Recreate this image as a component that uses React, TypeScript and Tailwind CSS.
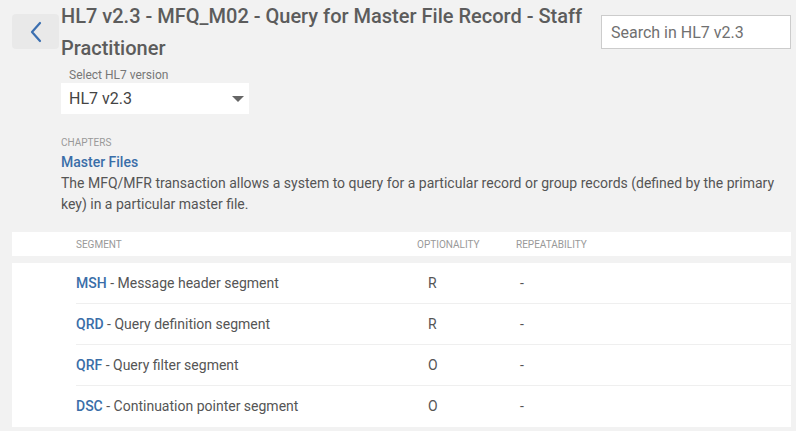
import React from "react";

const segments = [
  { code: "MSH", name: "Message header segment", opt: "R", rep: "-" },
  { code: "QRD", name: "Query definition segment", opt: "R", rep: "-" },
  { code: "QRF", name: "Query filter segment", opt: "O", rep: "-" },
  { code: "DSC", name: "Continuation pointer segment", opt: "O", rep: "-" },
];

const App: React.FC = () => {
  return (
    <div
      className="min-h-screen w-full bg-[#f2f2f2] px-[12px] pr-[5px] text-[#555]"
      style={{ fontFamily: "Roboto, 'Noto Sans', Arial, sans-serif" }}
    >
      <div className="flex items-start">
        <button className="mt-[14px] flex h-[35px] w-[47px] shrink-0 items-center justify-center rounded bg-[#e9e9e9]">
          <svg width="14" height="22" viewBox="0 0 14 22" fill="none">
            <path d="M11 2 L3 11 L11 20" stroke="#3b6fb0" strokeWidth="2.2" strokeLinecap="round" strokeLinejoin="round" />
          </svg>
        </button>
        <div className="ml-[2px] flex-1">
          <h1 className="text-[20px] font-medium leading-[32px] text-[#5c5c5c]">
            HL7 v2.3 - MFQ_M02 - Query for Master File Record - Staff Practitioner
          </h1>
        </div>
        <input
          className="mt-[15px] ml-[16px] h-[34px] w-[190px] shrink-0 border border-[#cccccc] bg-white px-[9px] text-[16px] text-[#555] outline-none placeholder:text-[#707070]"
          placeholder="Search in HL7 v2.3"
        />
      </div>

      <div className="ml-[49px]">
        <div className="mt-[3px] pl-[8px] text-[12px] leading-[16px] text-[#777]">Select HL7 version</div>
        <div className="flex h-[31px] w-[188px] items-center justify-between bg-white pl-[8px] pr-[4px]">
          <span className="text-[16px] text-[#444]">HL7 v2.3</span>
          <svg width="12" height="6" viewBox="0 0 12 6" className="mr-[1px]">
            <path d="M0 0 L12 0 L6 6 Z" fill="#666" />
          </svg>
        </div>

        <div className="mt-[22px] text-[10px] uppercase leading-[14px] text-[#999]">Chapters</div>
        <div className="mt-[2px] text-[14px] font-medium leading-[20px] text-[#3a6ea8]">Master Files</div>
        <p className="mt-[1px] text-[14px] leading-[21px] text-[#555]">
          The MFQ/MFR transaction allows a system to query for a particular record or group records (defined by the primary
          key) in a particular master file.
        </p>
      </div>

      <div className="mt-[17px] flex h-[24px] items-center bg-white text-[10px] uppercase text-[#999]">
        <div className="w-[405px] pl-[64px]">Segment</div>
        <div className="w-[99px]">Optionality</div>
        <div>Repeatability</div>
      </div>

      <div className="mt-[7px] bg-white pl-[64px]">
        {segments.map((s, i) => (
          <div
            key={s.code}
            className={
              "flex h-[41px] items-center text-[14px] " + (i < segments.length - 1 ? "border-b border-[#efefef]" : "")
            }
          >
            <div className="w-[352px]">
              <span className="font-medium text-[#3a6ea8]">{s.code}</span>
              <span className="text-[#555]"> - {s.name}</span>
            </div>
            <div className="w-[92px] text-[#555]">{s.opt}</div>
            <div className="text-[#555]">{s.rep}</div>
          </div>
        ))}
      </div>
    </div>
  );
};

export default App;
